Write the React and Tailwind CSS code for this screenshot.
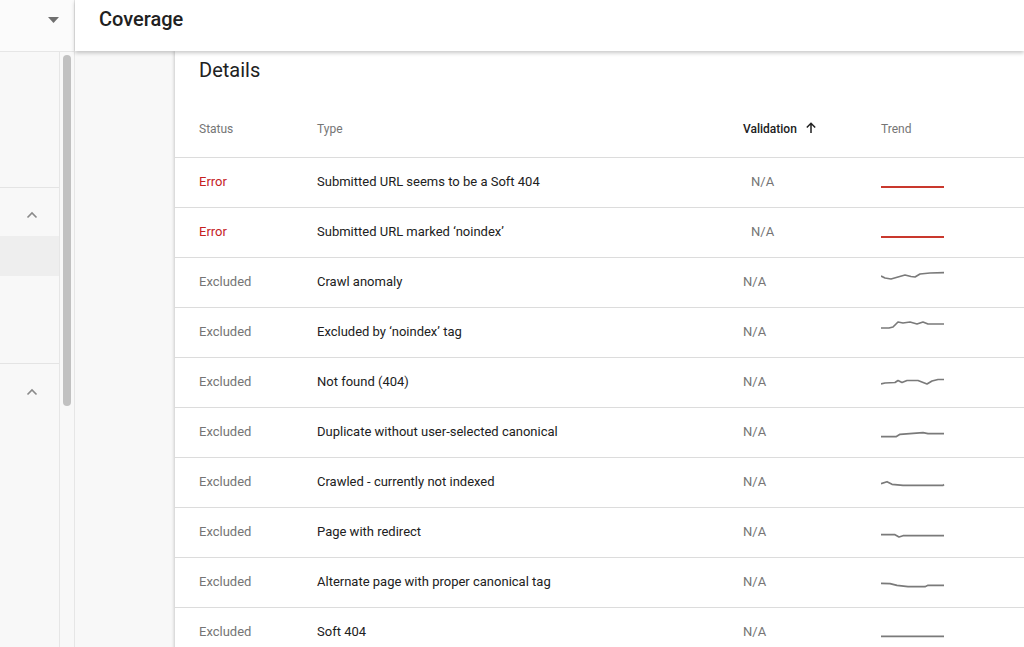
import React from "react";

const rows = [
  { status: "Error", type: "Submitted URL seems to be a Soft 404", error: true, pts: "0,29 63,29" },
  { status: "Error", type: "Submitted URL marked \u2018noindex\u2019", error: true, pts: "0,29 63,29" },
  { status: "Excluded", type: "Crawl anomaly", pts: "0,18 4,20 10,21 17,19 24,17 30,18.5 34,19 39,16 49,15 63,14.7" },
  { status: "Excluded", type: "Excluded by \u2018noindex\u2019 tag", pts: "0,20 8,20 12,19 17,14 22,15 29,14 36,16 42,14 47,16 63,16" },
  { status: "Excluded", type: "Not found (404)", pts: "0,26 4,25 14,24.5 17,22.5 21,24.5 26,22.5 37,22.5 46,26 51,23 57,21.5 63,21.5" },
  { status: "Excluded", type: "Duplicate without user-selected canonical", pts: "0,28.7 15,28.7 19,26.3 32,25.3 42,24.7 47,25.7 63,25.7" },
  { status: "Excluded", type: "Crawled - currently not indexed", pts: "0,25.7 6,23.7 11,26.3 22,27.3 62,27.3 63,26.5" },
  { status: "Excluded", type: "Page with redirect", pts: "0,26.7 14,26.7 18,29 22,27.7 63,27.7" },
  { status: "Excluded", type: "Alternate page with proper canonical tag", pts: "0,25.3 9,25.6 16,27.3 27,28.7 44,28.7 47,27.3 63,27.3" },
  { status: "Excluded", type: "Soft 404", pts: "0,28.3 63,28.3" },
];

const ChevronUp = () => (
  <svg width="12" height="8" viewBox="0 0 12 8" className="text-[#8a8a8a]">
    <path d="M1.5 6.5 L6 2 L10.5 6.5" fill="none" stroke="currentColor" strokeWidth="1.6" />
  </svg>
);

const Sparkline = ({ pts, error }) => (
  <svg width="64" height="32" viewBox="0 0 64 32" className="block">
    <polyline
      points={pts}
      fill="none"
      stroke={error ? "#c9382d" : "#7a7a7a"}
      strokeWidth={error ? 2 : 1.7}
      strokeLinejoin="round"
    />
  </svg>
);

export default function App() {
  return (
    <div className="flex h-[647px] w-[1024px] overflow-hidden bg-[#f8f8f8] font-['Roboto',sans-serif]">
      {/* left nav */}
      <div className="flex w-[75px] shrink-0 flex-col">
        <div className="flex h-[52px] shrink-0 items-start justify-end border-b border-r border-[#e6e6e6] bg-[#fbfbfb] pr-[15px] pt-[16px]">
          <svg width="11" height="6" viewBox="0 0 11 6" className="mt-[1px]">
            <path d="M0 0 H11 L5.5 6 Z" fill="#6f6f6f" />
          </svg>
        </div>
        <div className="flex flex-1">
          <div className="flex w-[60px] flex-col border-r border-[#e6e6e6] bg-[#f8f8f8]">
            <div className="h-[136px] border-b border-[#e4e4e4]" />
            <div className="flex h-[48px] items-start justify-end pr-[21px] pt-[23px]">
              <ChevronUp />
            </div>
            <div className="h-[40px] bg-[#eeeeee]" />
            <div className="h-[88px] border-b border-[#e4e4e4]" />
            <div className="flex h-[58px] items-start justify-end pr-[21px] pt-[24px]">
              <ChevronUp />
            </div>
          </div>
          <div className="w-[15px] border-r border-[#e6e6e6] bg-[#f8f8f8] pl-[3px] pt-[3px]">
            <div className="h-[351px] w-[8px] rounded-full bg-[#c1c1c1]" />
          </div>
        </div>
      </div>

      {/* main */}
      <div className="flex flex-1 flex-col">
        <div className="relative z-10 h-[51px] shrink-0 bg-white pl-[24px] pt-[7px] shadow-[0_2px_4px_rgba(0,0,0,0.22)]">
          <h1 className="text-[20px] leading-[24px] font-medium text-[#212121]">Coverage</h1>
        </div>
        <div className="flex flex-1">
          <div className="w-[100px] shrink-0 bg-[#f8f8f8]" />
          <div className="flex-1 bg-white shadow-[-1px_0_3px_rgba(0,0,0,0.18)]">
            <div className="pl-[24px] pt-[5px] text-[20px] leading-[28px] text-[#212121]">Details</div>
            <div className="flex h-[74px] items-end border-b border-[#dcdcdc] pb-[20px] pl-[24px] text-[12px] leading-[16px] text-[#757575]">
              <div className="w-[118px]">Status</div>
              <div className="w-[426px]">Type</div>
              <div className="flex w-[138px] items-center gap-[8px] font-medium text-[#212121]">
                Validation
                <svg width="12" height="12" viewBox="0 0 12 12" className="-mt-[3px]">
                  <path d="M6 11 V1.5 M1.8 5.5 L6 1.3 L10.2 5.5" fill="none" stroke="#212121" strokeWidth="1.5" />
                </svg>
              </div>
              <div>Trend</div>
            </div>
            {rows.map((r, i) => (
              <div key={i} className="flex h-[50px] border-b border-[#dcdcdc] pb-[2px] pl-[24px] text-[13px] leading-[16px]">
                <div className={`flex w-[118px] items-center ${r.error ? "text-[#c5221f]" : "text-[#757575]"}`}>{r.status}</div>
                <div className="flex w-[426px] items-center text-[#212121]">{r.type}</div>
                <div className={`flex w-[138px] items-center text-[#757575] ${r.error ? "pl-[8px]" : ""}`}>N/A</div>
                <div className="self-start">
                  <Sparkline pts={r.pts} error={r.error} />
                </div>
              </div>
            ))}
          </div>
        </div>
      </div>
    </div>
  );
}
